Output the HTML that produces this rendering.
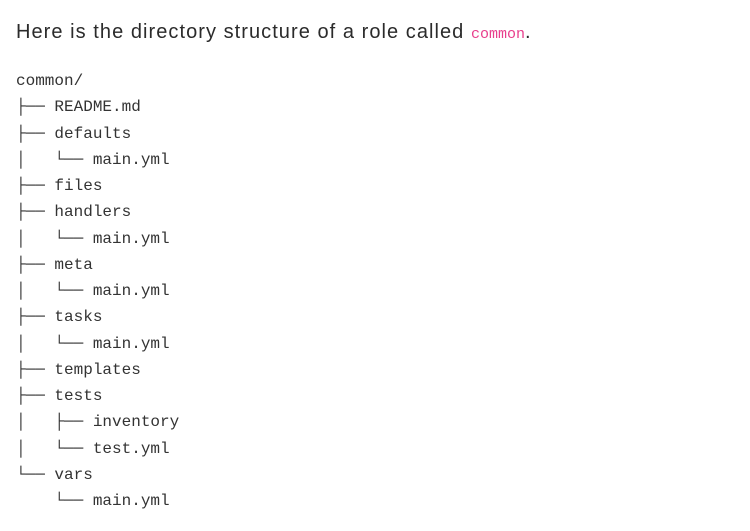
<!DOCTYPE html>
<html><head><style>
html,body{margin:0;padding:0;background:#fff;width:750px;height:531px;overflow:hidden}
p{position:absolute;left:16px;top:19px;margin:0;font-family:"Liberation Sans",sans-serif;font-size:20px;color:#2b2b2b;letter-spacing:1.05px;line-height:26px;white-space:nowrap}
code{font-family:"Liberation Mono","DejaVu Sans Mono",monospace;font-size:15px;color:#e83e8c;letter-spacing:0}
pre{position:absolute;left:16px;top:68px;margin:0;font-family:"Liberation Mono","DejaVu Sans Mono",monospace;font-size:16px;line-height:26.25px;color:#333}
</style></head><body>
<p>Here is the directory structure of a role called <code>common</code>.</p>
<pre>common/
├── README.md
├── defaults
│   └── main.yml
├── files
├── handlers
│   └── main.yml
├── meta
│   └── main.yml
├── tasks
│   └── main.yml
├── templates
├── tests
│   ├── inventory
│   └── test.yml
└── vars
    └── main.yml</pre>
</body></html>
